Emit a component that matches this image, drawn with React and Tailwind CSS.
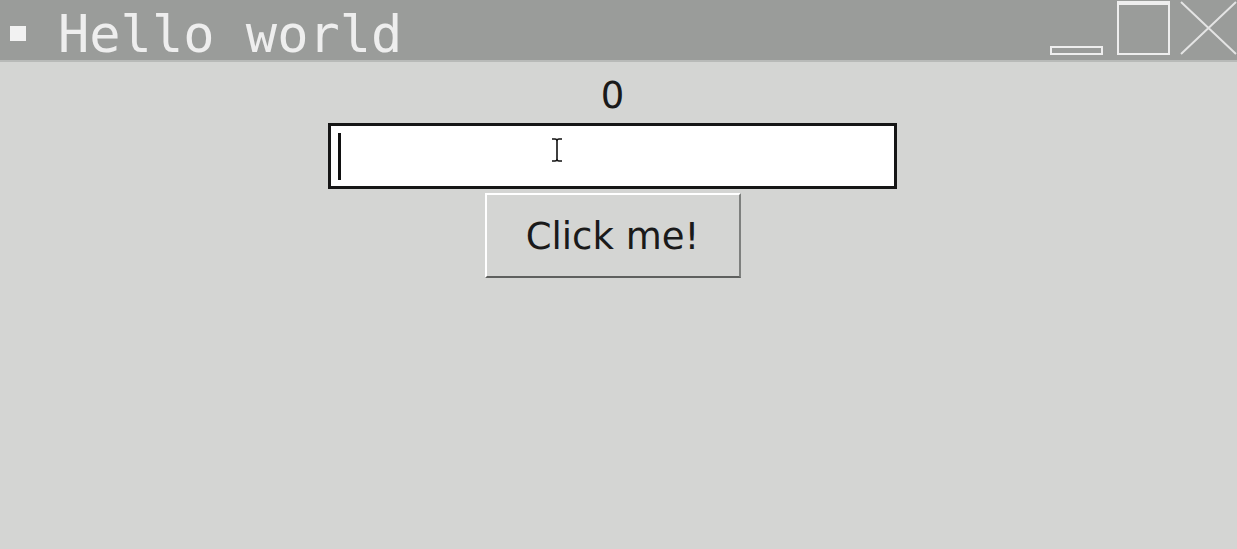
export default function App() {
  return (
    <div className="w-[1237px] h-[549px] bg-[#d4d5d3] flex flex-col overflow-hidden">
      {/* title bar */}
      <div className="h-[62px] bg-[#9a9c9a] border-b-2 border-[#b8bab8] flex items-center">
        <div className="w-[16px] h-[15px] bg-[#f2f2f2] ml-[10px] mt-[6px]" />
        <span
          className="ml-[32px] text-[52px] leading-none text-[#eeeeee] mt-[8px]"
          style={{ fontFamily: '"DejaVu Sans Mono", monospace' }}
        >
          Hello world
        </span>
        <div className="ml-auto flex items-end h-full pb-[5px]">
          <div className="w-[53px] h-[9px] border-2 border-[#eeeeee] mr-[14px]" />
          <div className="w-[53px] h-[54px] border-2 border-t-4 border-[#eeeeee]" />
          <svg width="57" height="54" viewBox="0 0 57 54" className="ml-[10px]">
            <path d="M1 1 L56 53 M56 1 L1 53" stroke="#e4e4e4" strokeWidth="2" fill="none" />
          </svg>
        </div>
      </div>

      {/* body */}
      <div
        className="flex flex-col items-center text-[#1a1a1a] pr-[12px]"
        style={{ fontFamily: '"DejaVu Sans", sans-serif' }}
      >
        <div className="text-[37px] leading-[57px] h-[59px] mt-[2px] pt-[3px]">0</div>
        <div className="w-[569px] h-[66px] bg-white border-[3px] border-[#161616] relative flex items-center pl-[7px]">
          <div className="w-[3px] h-[47px] bg-[#111]" />
          <svg width="12" height="24" viewBox="0 0 12 24" className="absolute left-[220px] top-[12px]">
            <path d="M1 1 H4 Q6 1 6 3 V21 Q6 23 4 23 H1 M11 1 H8 Q6 1 6 3 M6 21 Q6 23 8 23 H11" stroke="#111" strokeWidth="1.6" fill="none" />
          </svg>
        </div>
        <button className="mt-[4px] w-[256px] h-[85px] bg-[#d4d5d3] border-2 border-t-white border-l-white border-r-[#7e807e] border-b-[#5e605e] text-[37px] text-[#1a1a1a] leading-none pt-[2px]">
          Click me!
        </button>
      </div>
    </div>
  );
}
